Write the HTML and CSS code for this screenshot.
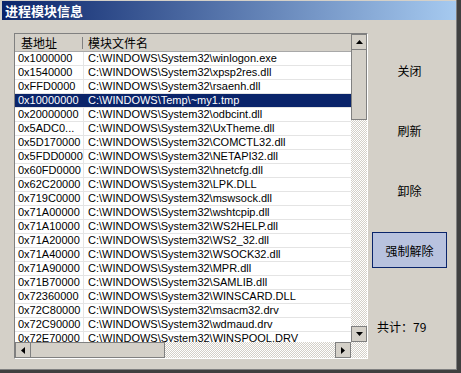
FILE: index.html
```html
<!DOCTYPE html>
<html lang="zh-CN">
<head>
    <meta charset="UTF-8">
    <title>进程模块信息</title>
    <link rel="stylesheet" href="styles.css">
</head>
<body>
    <div class="window">
        <div class="titlebar">进程模块信息</div>

        <div class="client">
            <div class="listview">
                <div class="view">
                    <div class="lv-header">
                        <div class="col-addr">基地址</div>
                        <div class="col-file">模块文件名</div>
                    </div>
                    <div class="row"><div class="col-addr">0x1000000</div><div class="col-file">C:\WINDOWS\System32\winlogon.exe</div></div>
                    <div class="row"><div class="col-addr">0x1540000</div><div class="col-file">C:\WINDOWS\System32\xpsp2res.dll</div></div>
                    <div class="row"><div class="col-addr">0xFFD0000</div><div class="col-file">C:\WINDOWS\System32\rsaenh.dll</div></div>
                    <div class="row selected"><div class="col-addr">0x10000000</div><div class="col-file">C:\WINDOWS\Temp\~my1.tmp</div></div>
                    <div class="row"><div class="col-addr">0x20000000</div><div class="col-file">C:\WINDOWS\System32\odbcint.dll</div></div>
                    <div class="row"><div class="col-addr">0x5ADC0...</div><div class="col-file">C:\WINDOWS\System32\UxTheme.dll</div></div>
                    <div class="row"><div class="col-addr">0x5D170000</div><div class="col-file">C:\WINDOWS\System32\COMCTL32.dll</div></div>
                    <div class="row"><div class="col-addr">0x5FDD0000</div><div class="col-file">C:\WINDOWS\System32\NETAPI32.dll</div></div>
                    <div class="row"><div class="col-addr">0x60FD0000</div><div class="col-file">C:\WINDOWS\System32\hnetcfg.dll</div></div>
                    <div class="row"><div class="col-addr">0x62C20000</div><div class="col-file">C:\WINDOWS\System32\LPK.DLL</div></div>
                    <div class="row"><div class="col-addr">0x719C0000</div><div class="col-file">C:\WINDOWS\System32\mswsock.dll</div></div>
                    <div class="row"><div class="col-addr">0x71A00000</div><div class="col-file">C:\WINDOWS\System32\wshtcpip.dll</div></div>
                    <div class="row"><div class="col-addr">0x71A10000</div><div class="col-file">C:\WINDOWS\System32\WS2HELP.dll</div></div>
                    <div class="row"><div class="col-addr">0x71A20000</div><div class="col-file">C:\WINDOWS\System32\WS2_32.dll</div></div>
                    <div class="row"><div class="col-addr">0x71A40000</div><div class="col-file">C:\WINDOWS\System32\WSOCK32.dll</div></div>
                    <div class="row"><div class="col-addr">0x71A90000</div><div class="col-file">C:\WINDOWS\System32\MPR.dll</div></div>
                    <div class="row"><div class="col-addr">0x71B70000</div><div class="col-file">C:\WINDOWS\System32\SAMLIB.dll</div></div>
                    <div class="row"><div class="col-addr">0x72360000</div><div class="col-file">C:\WINDOWS\System32\WINSCARD.DLL</div></div>
                    <div class="row"><div class="col-addr">0x72C80000</div><div class="col-file">C:\WINDOWS\System32\msacm32.drv</div></div>
                    <div class="row"><div class="col-addr">0x72C90000</div><div class="col-file">C:\WINDOWS\System32\wdmaud.drv</div></div>
                    <div class="row"><div class="col-addr">0x72E70000</div><div class="col-file">C:\WINDOWS\System32\WINSPOOL.DRV</div></div>
                </div>

                <div class="vscroll">
                    <div class="sb-btn">
                        <svg width="7" height="4" viewBox="0 0 7 4"><polygon points="3.5,0 7,4 0,4" fill="#000"/></svg>
                    </div>
                    <div class="sb-thumb-v"></div>
                    <div class="sb-track"></div>
                    <div class="sb-btn">
                        <svg width="7" height="4" viewBox="0 0 7 4"><polygon points="0,0 7,0 3.5,4" fill="#000"/></svg>
                    </div>
                </div>

                <div class="hscroll">
                    <div class="sb-btn">
                        <svg width="4" height="7" viewBox="0 0 4 7"><polygon points="4,0 4,7 0,3.5" fill="#000"/></svg>
                    </div>
                    <div class="sb-thumb-h"></div>
                    <div class="sb-track"></div>
                    <div class="sb-btn">
                        <svg width="4" height="7" viewBox="0 0 4 7"><polygon points="0,0 4,3.5 0,7" fill="#000"/></svg>
                    </div>
                </div>

                <div class="corner"></div>
            </div>

            <div class="side">
                <button class="btn">关闭</button>
                <button class="btn">刷新</button>
                <button class="btn">卸除</button>
                <button class="btn active">强制解除</button>
                <div class="total">共计：79</div>
            </div>
        </div>
    </div>
</body>
</html>
```

FILE: styles.css
```css
body {
    margin: 0;
    background-color: #404040;
    font-family: "Liberation Sans", "Noto Sans CJK SC", sans-serif;
    font-size: 11px;
}
.window {
    width: 457px;
    height: 370px;
    background-color: #d4d0c8;
    border-right: 1px solid #808080;
    border-bottom: 1px solid #808080;
    box-sizing: border-box;
    padding: 1px 0 0 2px;
}
.titlebar {
    height: 19px;
    width: 454px;
    background: linear-gradient(to right, #0a246a, #a6caf0);
    color: white;
    font-family: "Noto Sans CJK SC", sans-serif;
    font-weight: bold;
    font-size: 13px;
    line-height: 19px;
    padding-left: 3px;
    box-sizing: border-box;
}
.client {
    display: flex;
    padding: 13px 0 0 12px;
}
.listview {
    display: grid;
    grid-template-columns: 336px 16px;
    grid-template-rows: 308px 16px;
    border-top: 1px solid #808080;
    border-left: 1px solid #808080;
    border-right: 1px solid #ffffff;
    border-bottom: 1px solid #ffffff;
}
.view {
    background-color: #ffffff;
    overflow: hidden;
}
.lv-header {
    display: flex;
    height: 17px;
    background-color: #d4d0c8;
    border-bottom: 1px solid #a8a8a8;
    font-family: "Noto Sans CJK SC", sans-serif;
    font-size: 12px;
    line-height: 17px;
}
.lv-header .col-addr {
    width: 62px;
    padding-left: 6px;
    position: relative;
}
.lv-header .col-addr::after {
    content: "";
    position: absolute;
    right: 0;
    top: 3px;
    height: 12px;
    border-left: 1px solid #808080;
}
.lv-header .col-file {
    padding-left: 5px;
}
.row {
    display: flex;
    height: 13px;
    line-height: 13px;
    border-bottom: 1px solid #e4e4e4;
    white-space: nowrap;
    color: #000;
}
.row .col-addr {
    width: 65px;
    padding-left: 3px;
    border-right: 1px solid #e4e4e4;
    overflow: hidden;
}
.row .col-file {
    padding-left: 4px;
}
.row.selected {
    background-color: #0a246a;
    color: #ffffff;
}
.row.selected .col-addr {
    border-right-color: #0a246a;
}
.vscroll {
    display: flex;
    flex-direction: column;
}
.hscroll {
    display: flex;
}
.sb-btn {
    width: 16px;
    height: 16px;
    box-sizing: border-box;
    border: 1px solid #808080;
    background-color: #d4d0c8;
    display: flex;
    align-items: center;
    justify-content: center;
    flex-shrink: 0;
}
.sb-thumb-v {
    height: 69px;
    border: 1px solid #808080;
    border-top: none;
    background-color: #d4d0c8;
}
.sb-thumb-h {
    width: 133px;
    border: 1px solid #808080;
    border-left: none;
    background-color: #d4d0c8;
}
.sb-track, .corner {
    flex: 1;
    background: repeating-conic-gradient(#ffffff 0% 25%, #d4d0c8 0% 50%) 0 0 / 2px 2px;
}
.side {
    display: flex;
    flex-direction: column;
    gap: 24px;
    width: 75px;
    margin-left: 4px;
    padding-top: 19px;
}
.btn {
    height: 36px;
    width: 75px;
    border: none;
    background: none;
    font-family: "Noto Sans CJK SC", sans-serif;
    font-size: 12px;
    color: #000;
    padding: 0;
}
.btn.active {
    background-color: #b8c2de;
    border: 1px solid #0a246a;
}
.total {
    margin-top: 28px;
    padding-left: 5px;
    font-family: "Noto Sans CJK SC", sans-serif;
    font-size: 12px;
    line-height: 14px;
}
```
